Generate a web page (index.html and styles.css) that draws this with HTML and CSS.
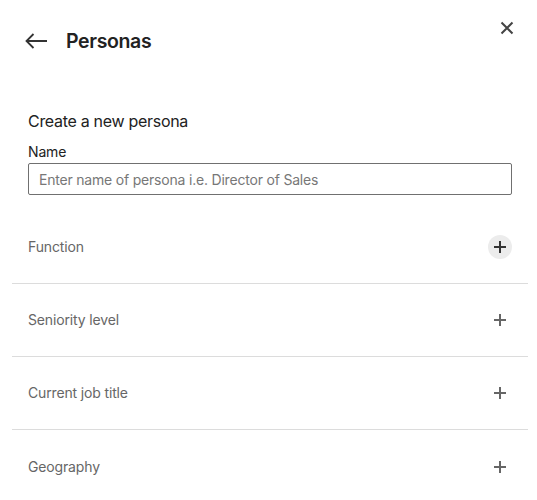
FILE: index.html
```html
<!DOCTYPE html>
<html>
<head>
<meta charset="utf-8">
<link rel="stylesheet" href="styles.css">
</head>
<body>
<div class="panel">
  <div class="header">
    <div class="title-group">
      <button class="icon-btn back" aria-label="Back">
        <svg width="24" height="24" viewBox="0 0 24 24"><path d="M23 12H2.5M9.5 5L2.5 12L9.5 19" fill="none" stroke="#333" stroke-width="1.8"/></svg>
      </button>
      <h1 class="title">Personas</h1>
    </div>
    <button class="icon-btn close" aria-label="Close">
      <svg width="24" height="24" viewBox="0 0 24 24"><path d="M6.5 6.5L17.5 17.5M17.5 6.5L6.5 17.5" fill="none" stroke="#444" stroke-width="2"/></svg>
    </button>
  </div>

  <div class="create">
    <h2 class="create-title">Create a new persona</h2>
    <label class="field-label" for="name">Name</label>
    <input id="name" class="text-input" type="text" placeholder="Enter name of persona i.e. Director of Sales">
  </div>

  <div class="rows">
    <div class="row">
      <span class="row-label">Function</span>
      <button class="add-btn active" aria-label="Add"><svg width="12" height="12" viewBox="0 0 12 12"><path d="M6 0V12M0 6H12" stroke="currentColor" stroke-width="2"/></svg></button>
    </div>
    <div class="row">
      <span class="row-label">Seniority level</span>
      <button class="add-btn" aria-label="Add"><svg width="12" height="12" viewBox="0 0 12 12"><path d="M6 0V12M0 6H12" stroke="currentColor" stroke-width="2"/></svg></button>
    </div>
    <div class="row">
      <span class="row-label">Current job title</span>
      <button class="add-btn" aria-label="Add"><svg width="12" height="12" viewBox="0 0 12 12"><path d="M6 0V12M0 6H12" stroke="currentColor" stroke-width="2"/></svg></button>
    </div>
    <div class="row">
      <span class="row-label">Geography</span>
      <button class="add-btn" aria-label="Add"><svg width="12" height="12" viewBox="0 0 12 12"><path d="M6 0V12M0 6H12" stroke="currentColor" stroke-width="2"/></svg></button>
    </div>
  </div>
</div>
</body>
</html>
```

FILE: styles.css
```css
* { box-sizing: border-box; }
html {
  overflow: hidden;
}
html, body {
  margin: 0;
  background: #fff;
  font-family: Inter, "Noto Sans", "Liberation Sans", sans-serif;
  color: #222;
}
.panel {
  padding: 0 9px 0 12px;
}
.header {
  display: flex;
  justify-content: space-between;
  align-items: flex-start;
  padding: 16px 9px 0 12px;
}
.title-group {
  display: flex;
  align-items: center;
  margin-top: 13px;
  height: 24px;
}
.icon-btn {
  border: 0;
  background: none;
  padding: 0;
  width: 24px;
  height: 24px;
  display: flex;
  cursor: pointer;
}
.title {
  margin: 0 0 0 18px;
  font-size: 19.5px;
  line-height: 24px;
  font-weight: 600;
  letter-spacing: -0.35px;
  color: #222;
}
.create {
  margin-top: 56px;
  padding: 0 16px 16px;
  display: flex;
  flex-direction: column;
}
.create-title {
  margin: 0;
  font-size: 16px;
  line-height: 24px;
  font-weight: 400;
  letter-spacing: -0.3px;
  color: #222;
}
.field-label {
  margin-top: 9px;
  font-size: 14px;
  line-height: 20px;
  letter-spacing: -0.15px;
  color: #222;
}
.text-input {
  margin-top: 1px;
  height: 32px;
  width: 100%;
  border: 1px solid #707070;
  border-radius: 2px;
  padding: 0 10px;
  font-family: inherit;
  font-size: 14px;
  letter-spacing: -0.2px;
  color: #222;
}
.text-input::placeholder {
  color: #777;
}
.row {
  height: 73px;
  padding: 0 16px;
  display: flex;
  align-items: center;
  justify-content: space-between;
  border-bottom: 1px solid #dcdcdc;
}
.row:last-child {
  border-bottom: 0;
}
.row-label {
  font-size: 14px;
  line-height: 20px;
  letter-spacing: -0.15px;
  color: #666;
}
.add-btn {
  width: 24px;
  height: 24px;
  border: 0;
  border-radius: 50%;
  background: none;
  padding: 0;
  display: flex;
  align-items: center;
  justify-content: center;
  color: #666;
  cursor: pointer;
}
.add-btn.active {
  background: #ececec;
  color: #333;
}
```
